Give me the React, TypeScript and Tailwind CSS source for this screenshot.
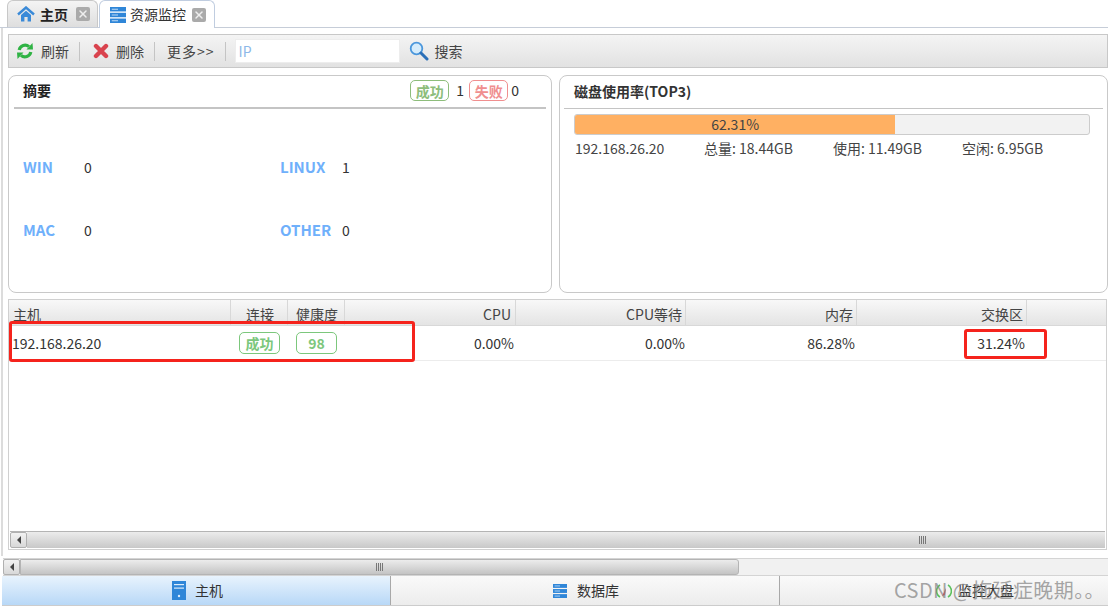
import { X } from 'lucide-react';

const FONT = '"Noto Sans CJK SC", "Noto Sans", sans-serif';

function Sep({ ml, mr }: { ml: string; mr: string }) {
  return <div className={`w-px h-[19px] bg-[#c4c4c4] ${ml} ${mr}`} />;
}

function CloseBox() {
  return (
    <span className="w-[14px] h-[14px] bg-[#aaaaaa] rounded-[2px] flex items-center justify-center">
      <X size={12} strokeWidth={3} className="text-[#eeeeee]" />
    </span>
  );
}

function Tag({ text, color, w = 'w-[41px]', h = 'h-[22px]' }: { text: string; color: string; w?: string; h?: string }) {
  return (
    <span
      className={`${w} ${h} bg-white rounded-[5px] border flex items-center justify-center text-[14px] font-bold leading-none`}
      style={{ borderColor: color, color }}
    >
      {text}
    </span>
  );
}

function ServerIcon({ className }: { className: string }) {
  return (
    <svg viewBox="0 0 18 18" className={className}>
      <rect x="0" y="0" width="18" height="5" fill="#2f86d8" />
      <rect x="0" y="6.5" width="18" height="5" fill="#2f86d8" />
      <rect x="0" y="13" width="18" height="5" fill="#2f86d8" />
      <rect x="2" y="2" width="7" height="1" fill="#cfe5fa" />
      <rect x="2" y="8.5" width="7" height="1" fill="#cfe5fa" />
      <rect x="2" y="15" width="7" height="1" fill="#cfe5fa" />
    </svg>
  );
}

function HomeIcon() {
  return (
    <svg viewBox="0 0 18 16" className="w-[18px] h-[16px]">
      <path d="M1 8.5 L9 1.5 L17 8.5" fill="none" stroke="#3a8ad8" strokeWidth="2.4" strokeLinejoin="miter" />
      <path d="M4 9 L9 4.8 L14 9 V15.5 H10.6 V11 H7.4 V15.5 H4 Z" fill="#3a8ad8" />
    </svg>
  );
}

function RefreshIcon() {
  return (
    <svg viewBox="0 0 18 18" className="w-[18px] h-[18px]">
      <path d="M3.2 8 A6 6 0 0 1 13 4.6" fill="none" stroke="#2fb344" strokeWidth="3.2" />
      <path d="M10.5 7.5 L17 7.5 L16.5 1 Z" fill="#2fb344" />
      <path d="M14.8 10 A6 6 0 0 1 5 13.4" fill="none" stroke="#2fb344" strokeWidth="3.2" />
      <path d="M7.5 10.5 L1 10.5 L1.5 17 Z" fill="#2fb344" />
    </svg>
  );
}

function DeleteIcon() {
  return (
    <svg viewBox="0 0 16 16" className="w-[16px] h-[16px]">
      <path d="M3 3 L13 13 M13 3 L3 13" stroke="#d9434e" strokeWidth="4.4" strokeLinecap="round" />
    </svg>
  );
}

function SearchIcon() {
  return (
    <svg viewBox="0 0 20 20" className="w-[20px] h-[20px]">
      <circle cx="7.5" cy="7.5" r="5.8" fill="#d6ecfb" stroke="#4b97dc" strokeWidth="1.8" />
      <path d="M12 12 L18 18" stroke="#2a6fb8" strokeWidth="3" strokeLinecap="round" />
    </svg>
  );
}

function Stat({ label, value, labelW }: { label: string; value: string; labelW: string }) {
  return (
    <div className="flex items-center">
      <span className={`${labelW} text-[15px] font-bold text-[#6fb0fb]`}>{label}</span>
      <span className="text-[14px] text-[#333]">{value}</span>
    </div>
  );
}

function HeadCell({ text, w, align }: { text: string; w: string; align: string }) {
  return (
    <div className={`${w} shrink-0 h-full border-r border-[#d8d8d8] flex items-end pb-[1px] text-[14px] text-[#444] leading-[20px] ${align}`}>
      {text}
    </div>
  );
}

function ScrollArrow() {
  return (
    <div className="w-[17px] shrink-0 h-full border border-[#b0b0b0] rounded-[2px] bg-gradient-to-b from-[#f2f2f2] to-[#d8d8d8] flex items-center justify-center">
      <span className="w-0 h-0 border-y-[4px] border-y-transparent border-r-[4px] border-r-[#444]" />
    </div>
  );
}

function Grip() {
  return (
    <div className="flex gap-[1px]">
      <span className="w-px h-[8px] bg-[#777]" />
      <span className="w-px h-[8px] bg-[#777]" />
      <span className="w-px h-[8px] bg-[#777]" />
      <span className="w-px h-[8px] bg-[#777]" />
    </div>
  );
}

export default function App() {
  return (
    <div className="relative w-[1108px] h-[608px] bg-white overflow-hidden flex flex-col text-[#333]" style={{ fontFamily: FONT }}>
      {/* Tabs */}
      <div className="h-[28px] shrink-0 flex items-end border-b border-[#c6cdd8] pl-[7px] gap-[1px]">
        <div className="h-[27px] w-[91px] rounded-t-[6px] border border-b-0 border-[#c8c8c8] bg-gradient-to-b from-[#f4f4f4] to-[#dedede] flex items-center pl-[9px]">
          <HomeIcon />
          <span className="ml-[5px] text-[14px] font-bold text-[#222]">主页</span>
          <span className="ml-[8px]"><CloseBox /></span>
        </div>
        <div className="h-[28px] w-[116px] -mb-px rounded-t-[6px] border border-b-0 border-[#c0cde0] bg-white flex items-center pl-[10px]">
          <ServerIcon className="w-[16px] h-[16px]" />
          <span className="ml-[4px] text-[14px] text-[#333]">资源监控</span>
          <span className="ml-[6px]"><CloseBox /></span>
        </div>
      </div>

      <div className="flex-1 min-h-0 flex flex-col ml-px border-l-2 border-[#dcdcdc] pl-[5px] pt-[6px]">
        {/* Toolbar */}
        <div className="h-[34px] shrink-0 border border-[#c8c8c8] bg-gradient-to-b from-[#f4f4f4] to-[#e2e2e2] flex items-center pl-[7px] text-[14px] text-[#444]">
          <RefreshIcon />
          <span className="ml-[7px]">刷新</span>
          <Sep ml="ml-[10px]" mr="mr-[13px]" />
          <DeleteIcon />
          <span className="ml-[7px]">删除</span>
          <Sep ml="ml-[10px]" mr="mr-[12px]" />
          <span className="tracking-[1px]">更多&gt;&gt;</span>
          <Sep ml="ml-[10px]" mr="mr-[9px]" />
          <div className="w-[165px] h-[24px] bg-white border border-[#ededed] flex items-center pl-[3px] text-[14px] text-[#8db8e8]">IP</div>
          <span className="ml-[9px]"><SearchIcon /></span>
          <span className="ml-[6px]">搜索</span>
        </div>

        {/* Summary panels */}
        <div className="h-[218px] shrink-0 mt-[7px] flex gap-[7px]">
          <div className="w-[544px] border border-[#c9c9c9] rounded-[8px] px-[5px] flex flex-col">
            <div className="h-[33px] shrink-0 border-b-2 border-[#c4c4c4] flex items-center pl-[9px] pr-[27px] pb-[2px]">
              <span className="text-[14px] font-bold text-[#222]">摘要</span>
              <div className="ml-auto flex items-center">
                <Tag text="成功" color="#8dbd7b" w="w-[39px]" h="h-[21px]" />
                <span className="ml-[3px] mr-[1px] w-[16px] text-center text-[14px]">1</span>
                <Tag text="失败" color="#f08f8f" w="w-[39px]" h="h-[21px]" />
                <span className="ml-[3px] text-[14px]">0</span>
              </div>
            </div>
            <div className="grid grid-cols-[257px_1fr] grid-rows-2 h-[126px] mt-[27px] pl-[9px]">
              <Stat label="WIN" value="0" labelW="w-[61px]" />
              <Stat label="LINUX" value="1" labelW="w-[62px]" />
              <Stat label="MAC" value="0" labelW="w-[61px]" />
              <Stat label="OTHER" value="0" labelW="w-[62px]" />
            </div>
          </div>
          <div className="flex-1 border border-[#c9c9c9] rounded-[8px] px-[4px] flex flex-col">
            <div className="h-[33px] shrink-0 border-b border-[#c4c4c4] flex items-center pl-[10px] pb-[2px]">
              <span className="text-[14px] font-bold text-[#333]">磁盘使用率(TOP3)</span>
            </div>
            <div className="mt-[5px] ml-[10px] w-[516px] h-[21px] border border-[#cccccc] rounded-[3px] bg-[#f2f2f2] overflow-hidden">
              <div className="h-full bg-[#ffb062] flex items-center justify-center text-[14px] text-[#444]" style={{ width: '62.31%' }}>62.31%</div>
            </div>
            <div className="ml-[11px] mt-[3px] flex text-[14px] text-[#444] leading-[20px]">
              <span className="w-[129px]">192.168.26.20</span>
              <span className="w-[129px]">总量: 18.44GB</span>
              <span className="w-[129px]">使用: 11.49GB</span>
              <span>空闲: 6.95GB</span>
            </div>
          </div>
        </div>

        {/* Host grid */}
        <div className="h-[251px] shrink-0 mt-[6px] mr-[1px] border border-[#d0d0d0] flex flex-col">
          <div className="h-[26px] shrink-0 flex bg-gradient-to-b from-[#f8f8f8] to-[#e4e4e4] border-b border-[#d8d8d8]">
            <HeadCell text="主机" w="w-[222px]" align="justify-start pl-[4px]" />
            <HeadCell text="连接" w="w-[57px]" align="justify-center pl-[2px]" />
            <HeadCell text="健康度" w="w-[57px]" align="justify-center pl-[2px]" />
            <HeadCell text="CPU" w="w-[171px]" align="justify-end pr-[4px]" />
            <HeadCell text="CPU等待" w="w-[170px]" align="justify-end pr-[3px]" />
            <HeadCell text="内存" w="w-[171px]" align="justify-end pr-[3px]" />
            <HeadCell text="交换区" w="w-[170px]" align="justify-end pr-[3px]" />
          </div>
          <div className="h-[35px] shrink-0 flex items-center border-b border-[#ececec] text-[14px] text-[#333]">
            <div className="w-[222px] pl-[3px]">192.168.26.20</div>
            <div className="w-[57px] flex justify-center"><Tag text="成功" color="#7cc77c" /></div>
            <div className="w-[57px] flex justify-center"><Tag text="98" color="#7cc77c" /></div>
            <div className="w-[171px] text-right pr-[2px]">0.00%</div>
            <div className="w-[170px] text-right pr-[1px]">0.00%</div>
            <div className="w-[171px] text-right pr-[2px]">86.28%</div>
            <div className="w-[170px] text-right pr-[2px]">31.24%</div>
          </div>
          <div className="flex-1" />
          <div className="h-[17px] mx-px mb-px shrink-0 flex items-center border-t border-[#b4b4b4]">
            <ScrollArrow />
            <div className="flex-1 h-full bg-gradient-to-b from-[#ececec] to-[#c8c8c8] flex items-center pl-[892px]">
              <Grip />
            </div>
          </div>
        </div>
      </div>

      {/* Outer scrollbar */}
      <div className="h-[18px] shrink-0 mt-[2px] ml-[3px] flex items-center bg-[#f1f1f1] border-y border-[#d4d4d4]">
        <ScrollArrow />
        <div className="w-[719px] h-full border border-[#b4b4b4] rounded-r-[3px] bg-gradient-to-b from-[#ececec] to-[#c4c4c4] flex items-center justify-center">
          <Grip />
        </div>
      </div>

      {/* Bottom nav */}
      <div className="h-[30px] shrink-0 ml-[2px] mb-[2px] border-b border-[#cccccc] flex text-[14px] text-[#333] bg-gradient-to-b from-[#fafafa] to-[#ececec]">
        <div className="w-[389px] border-r border-[#a8a8a8] bg-gradient-to-b from-[#e8f3fd] to-[#b8d8f7] flex items-center pl-[170px] gap-[9px]">
          <svg viewBox="0 0 14 19" className="w-[14px] h-[19px]">
            <rect width="14" height="19" fill="#2f86d8" />
            <rect x="2" y="3" width="10" height="1.2" fill="#dcecfb" />
            <rect x="2" y="6.5" width="10" height="1.2" fill="#dcecfb" />
            <circle cx="7" cy="15" r="1.2" fill="#dcecfb" />
          </svg>
          <span>主机</span>
        </div>
        <div className="w-[389px] border-r border-[#a8a8a8] flex items-center pl-[162px] gap-[10px]">
          <ServerIcon className="w-[14px] h-[18px]" />
          <span>数据库</span>
        </div>
        <div className="flex-1 flex items-center pl-[156px] gap-[6px]">
          <svg viewBox="0 0 16 16" className="w-[16px] h-[16px]">
            <path d="M4 14 A7 7 0 0 1 4 2 M12 2 A7 7 0 0 1 12 14" fill="none" stroke="#5cc05c" strokeWidth="1.6" />
            <path d="M6 13 L10 5 L9 12 Z" fill="#e0484d" />
          </svg>
          <span>监控大盘</span>
        </div>
      </div>

      {/* Annotations */}
      <div className="absolute left-[9px] top-[321px] w-[406px] h-[41px] border-[3px] border-[#f5231c] rounded-[3px]" />
      <div className="absolute left-[964px] top-[329px] w-[83px] h-[30px] border-[3px] border-[#f5231c] rounded-[3px]" />
      <div className="absolute left-[894px] top-[576px] text-[20px] leading-[28px] tracking-[0.4px] text-[#808080]/70 whitespace-nowrap">CSDN @拖延症晚期。。</div>
    </div>
  );
}
